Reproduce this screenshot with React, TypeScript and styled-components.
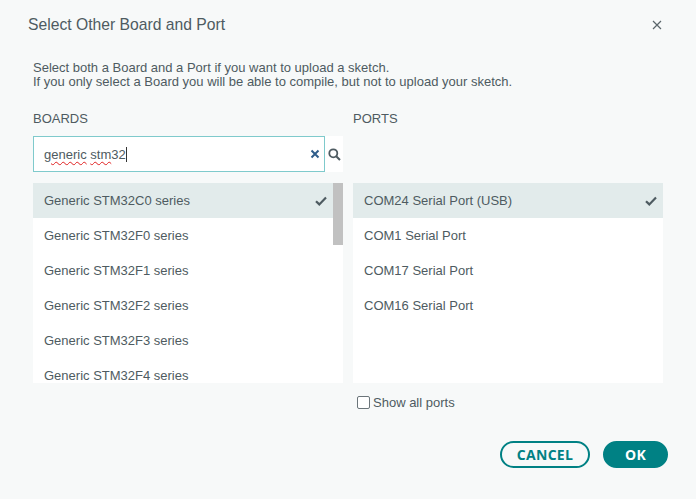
import React from "react";
import styled, { createGlobalStyle } from "styled-components";

const Global = createGlobalStyle`
  html, body { margin: 0; padding: 0; background: #f7f9f9; }
  body { font-family: "Liberation Sans", Arial, sans-serif; }
`;

const Dialog = styled.div`
  width: 696px;
  height: 499px;
  box-sizing: border-box;
  background: #f7f9f9;
  color: #4e5b61;
  display: flex;
  flex-direction: column;
`;

const Header = styled.div`
  display: flex;
  align-items: center;
  justify-content: space-between;
  height: 48px;
  padding: 0 32px 0 28px;
`;

const Title = styled.div`
  font-size: 15.7px;
  color: #4e5b61;
  padding-top: 1px;
`;

const Close = styled.button`
  border: none;
  background: none;
  padding: 0;
  width: 14px;
  height: 14px;
  display: flex;
  align-items: center;
  justify-content: center;
  margin-top: 2px;
`;

const Body = styled.div`
  padding: 13px 33px 0 33px;
  display: flex;
  flex-direction: column;
`;

const Description = styled.div`
  font-size: 13px;
  line-height: 14px;
  color: #4e5b61;
`;

const Columns = styled.div`
  display: flex;
  gap: 10px;
  margin-top: 22px;
`;

const Column = styled.div`
  width: 310px;
  display: flex;
  flex-direction: column;
`;

const Label = styled.div`
  font-size: 13px;
  line-height: 16px;
  text-transform: uppercase;
  color: #4e5b61;
  height: 18px;
`;

const SearchRow = styled.div`
  margin-top: 7px;
  height: 36px;
  display: flex;
  background: #ffffff;
`;

const SearchBox = styled.div`
  flex: 1;
  box-sizing: border-box;
  border: 1px solid #7fcacc;
  display: flex;
  align-items: center;
  padding: 0 4px 0 10px;
  font-size: 13px;
  color: #4e5b61;
`;

const Typed = styled.span`
  flex: 1;
  white-space: pre;
`;

const Misspelled = styled.span`
  text-decoration: underline wavy #e02020;
  text-decoration-thickness: 1px;
  text-underline-offset: 2px;
`;

const Caret = styled.span`
  display: inline-block;
  width: 1px;
  height: 15px;
  background: #333;
  vertical-align: -3px;
`;

const IconSlot = styled.div`
  width: 18px;
  display: flex;
  align-items: center;
  justify-content: center;
`;

const Spacer = styled.div`
  margin-top: 7px;
  height: 36px;
`;

const ListBox = styled.div`
  margin-top: 11px;
  height: 200px;
  background: #ffffff;
  display: flex;
  overflow: hidden;
`;

const Rows = styled.div`
  flex: 1;
  display: flex;
  flex-direction: column;
`;

const Row = styled.div<{ $selected?: boolean }>`
  height: 35px;
  flex: none;
  display: flex;
  align-items: center;
  justify-content: space-between;
  padding: 0 6px 0 11px;
  font-size: 13px;
  color: #4e5b61;
  background: ${(p) => (p.$selected ? "#e2ebeb" : "#ffffff")};
`;

const ScrollTrack = styled.div`
  width: 10px;
  background: #ffffff;
`;

const ScrollThumb = styled.div`
  height: 62px;
  background: #c1c1c1;
`;

const CheckRow = styled.label`
  display: flex;
  align-items: center;
  gap: 3px;
  margin-top: 12px;
  margin-left: 4px;
  font-size: 13px;
  color: #4e5b61;
`;

const Box = styled.span`
  width: 11px;
  height: 11px;
  border: 1px solid #6b757a;
  border-radius: 2px;
  background: #fff;
  display: inline-block;
`;

const Footer = styled.div`
  display: flex;
  justify-content: flex-end;
  gap: 13px;
  padding: 0 28px 0 0;
  margin-top: 31px;
`;

const Button = styled.button<{ $primary?: boolean }>`
  height: 27px;
  box-sizing: border-box;
  border-radius: 14px;
  border: 2px solid #008184;
  background: ${(p) => (p.$primary ? "#008184" : "transparent")};
  color: ${(p) => (p.$primary ? "#ffffff" : "#008184")};
  font-family: "Open Sans", sans-serif;
  font-weight: 700;
  font-size: 14px;
  letter-spacing: 0.3px;
  padding: 0;
  width: ${(p) => (p.$primary ? "65px" : "90px")};
  cursor: pointer;
`;

const Check = () => (
  <svg width="12" height="10" viewBox="0 0 12 10">
    <path d="M1 5.2 L4.3 8.4 L11 1.6" fill="none" stroke="#4e5b61" strokeWidth="2.2" />
  </svg>
);

const boards = [
  "Generic STM32C0 series",
  "Generic STM32F0 series",
  "Generic STM32F1 series",
  "Generic STM32F2 series",
  "Generic STM32F3 series",
  "Generic STM32F4 series",
];

const ports = [
  "COM24 Serial Port (USB)",
  "COM1 Serial Port",
  "COM17 Serial Port",
  "COM16 Serial Port",
];

export default function App() {
  return (
    <>
      <Global />
      <Dialog>
        <Header>
          <Title>Select Other Board and Port</Title>
          <Close aria-label="close">
            <svg width="10" height="10" viewBox="0 0 10 10">
              <path d="M1 1 L9 9 M9 1 L1 9" stroke="#5b666b" strokeWidth="1.2" />
            </svg>
          </Close>
        </Header>
        <Body>
          <Description>
            Select both a Board and a Port if you want to upload a sketch.
            <br />
            If you only select a Board you will be able to compile, but not to upload your sketch.
          </Description>
          <Columns>
            <Column>
              <Label>Boards</Label>
              <SearchRow>
                <SearchBox>
                  <Typed>
                    <Misspelled>generic</Misspelled> <Misspelled>stm</Misspelled>32
                    <Caret />
                  </Typed>
                  <svg width="10" height="10" viewBox="0 0 10 10">
                    <path d="M1.5 1.5 L8.5 8.5 M8.5 1.5 L1.5 8.5" stroke="#2f5d8a" strokeWidth="2" />
                  </svg>
                </SearchBox>
                <IconSlot>
                  <svg width="13" height="13" viewBox="0 0 13 13">
                    <circle cx="5.3" cy="5.3" r="4" fill="none" stroke="#4e5b61" strokeWidth="1.8" />
                    <path d="M8.2 8.2 L12 12" stroke="#4e5b61" strokeWidth="2" />
                  </svg>
                </IconSlot>
              </SearchRow>
              <ListBox>
                <Rows>
                  {boards.map((b, i) => (
                    <Row key={b} $selected={i === 0}>
                      {b}
                      {i === 0 && <Check />}
                    </Row>
                  ))}
                </Rows>
                <ScrollTrack>
                  <ScrollThumb />
                </ScrollTrack>
              </ListBox>
            </Column>
            <Column>
              <Label>Ports</Label>
              <Spacer />
              <ListBox>
                <Rows>
                  {ports.map((p, i) => (
                    <Row key={p} $selected={i === 0}>
                      {p}
                      {i === 0 && <Check />}
                    </Row>
                  ))}
                </Rows>
              </ListBox>
              <CheckRow>
                <Box />
                Show all ports
              </CheckRow>
            </Column>
          </Columns>
        </Body>
        <Footer>
          <Button>CANCEL</Button>
          <Button $primary>OK</Button>
        </Footer>
      </Dialog>
    </>
  );
}
